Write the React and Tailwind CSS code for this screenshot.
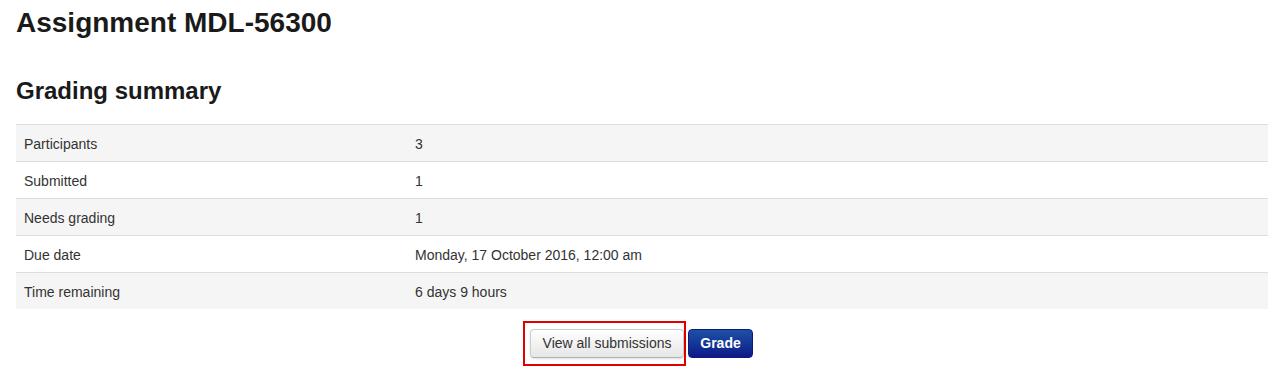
export default function App() {
  const rows = [
    ["Participants", "3"],
    ["Submitted", "1"],
    ["Needs grading", "1"],
    ["Due date", "Monday, 17 October 2016, 12:00 am"],
    ["Time remaining", "6 days 9 hours"],
  ];

  return (
    <div className="min-h-screen bg-white px-4 text-[#333] font-['Liberation_Sans',Arial,sans-serif]">
      <h2 className="pt-[3px] text-[28px] font-bold leading-[40px] text-[#1a1a1a]">
        Assignment MDL-56300
      </h2>
      <h3 className="mt-[33px] text-[24px] font-bold leading-[30px] text-[#1a1a1a]">
        Grading summary
      </h3>
      <table className="mt-[18px] w-full border-collapse text-[14px] text-[#333]">
        <tbody>
          {rows.map(([label, value], i) => (
            <tr
              key={label}
              className={`border-t border-[#dddddd] ${i % 2 === 0 ? "bg-[#f5f5f5]" : "bg-white"}`}
            >
              <td className="w-[391px] px-2 pt-[9px] pb-[7px] leading-5">{label}</td>
              <td className="px-2 pt-[9px] pb-[7px] leading-5">{value}</td>
            </tr>
          ))}
        </tbody>
      </table>
      <div className="mt-3 flex items-center justify-center gap-[2px] pr-2">
        <div className="border-2 border-[#e00000] py-[6px] pl-[5px] pr-0">
          <button className="h-[29px] w-[154px] rounded border border-[#cccccc] border-b-[#b3b3b3] bg-gradient-to-b from-white to-[#e6e6e6] text-[14px] text-[#333] shadow-sm">
            View all submissions
          </button>
        </div>
        <button className="h-[29px] w-[65px] rounded border border-[#0c1a7a] bg-gradient-to-b from-[#1f4fa5] to-[#0f178a] text-[14px] font-bold text-white">
          Grade
        </button>
      </div>
    </div>
  );
}
